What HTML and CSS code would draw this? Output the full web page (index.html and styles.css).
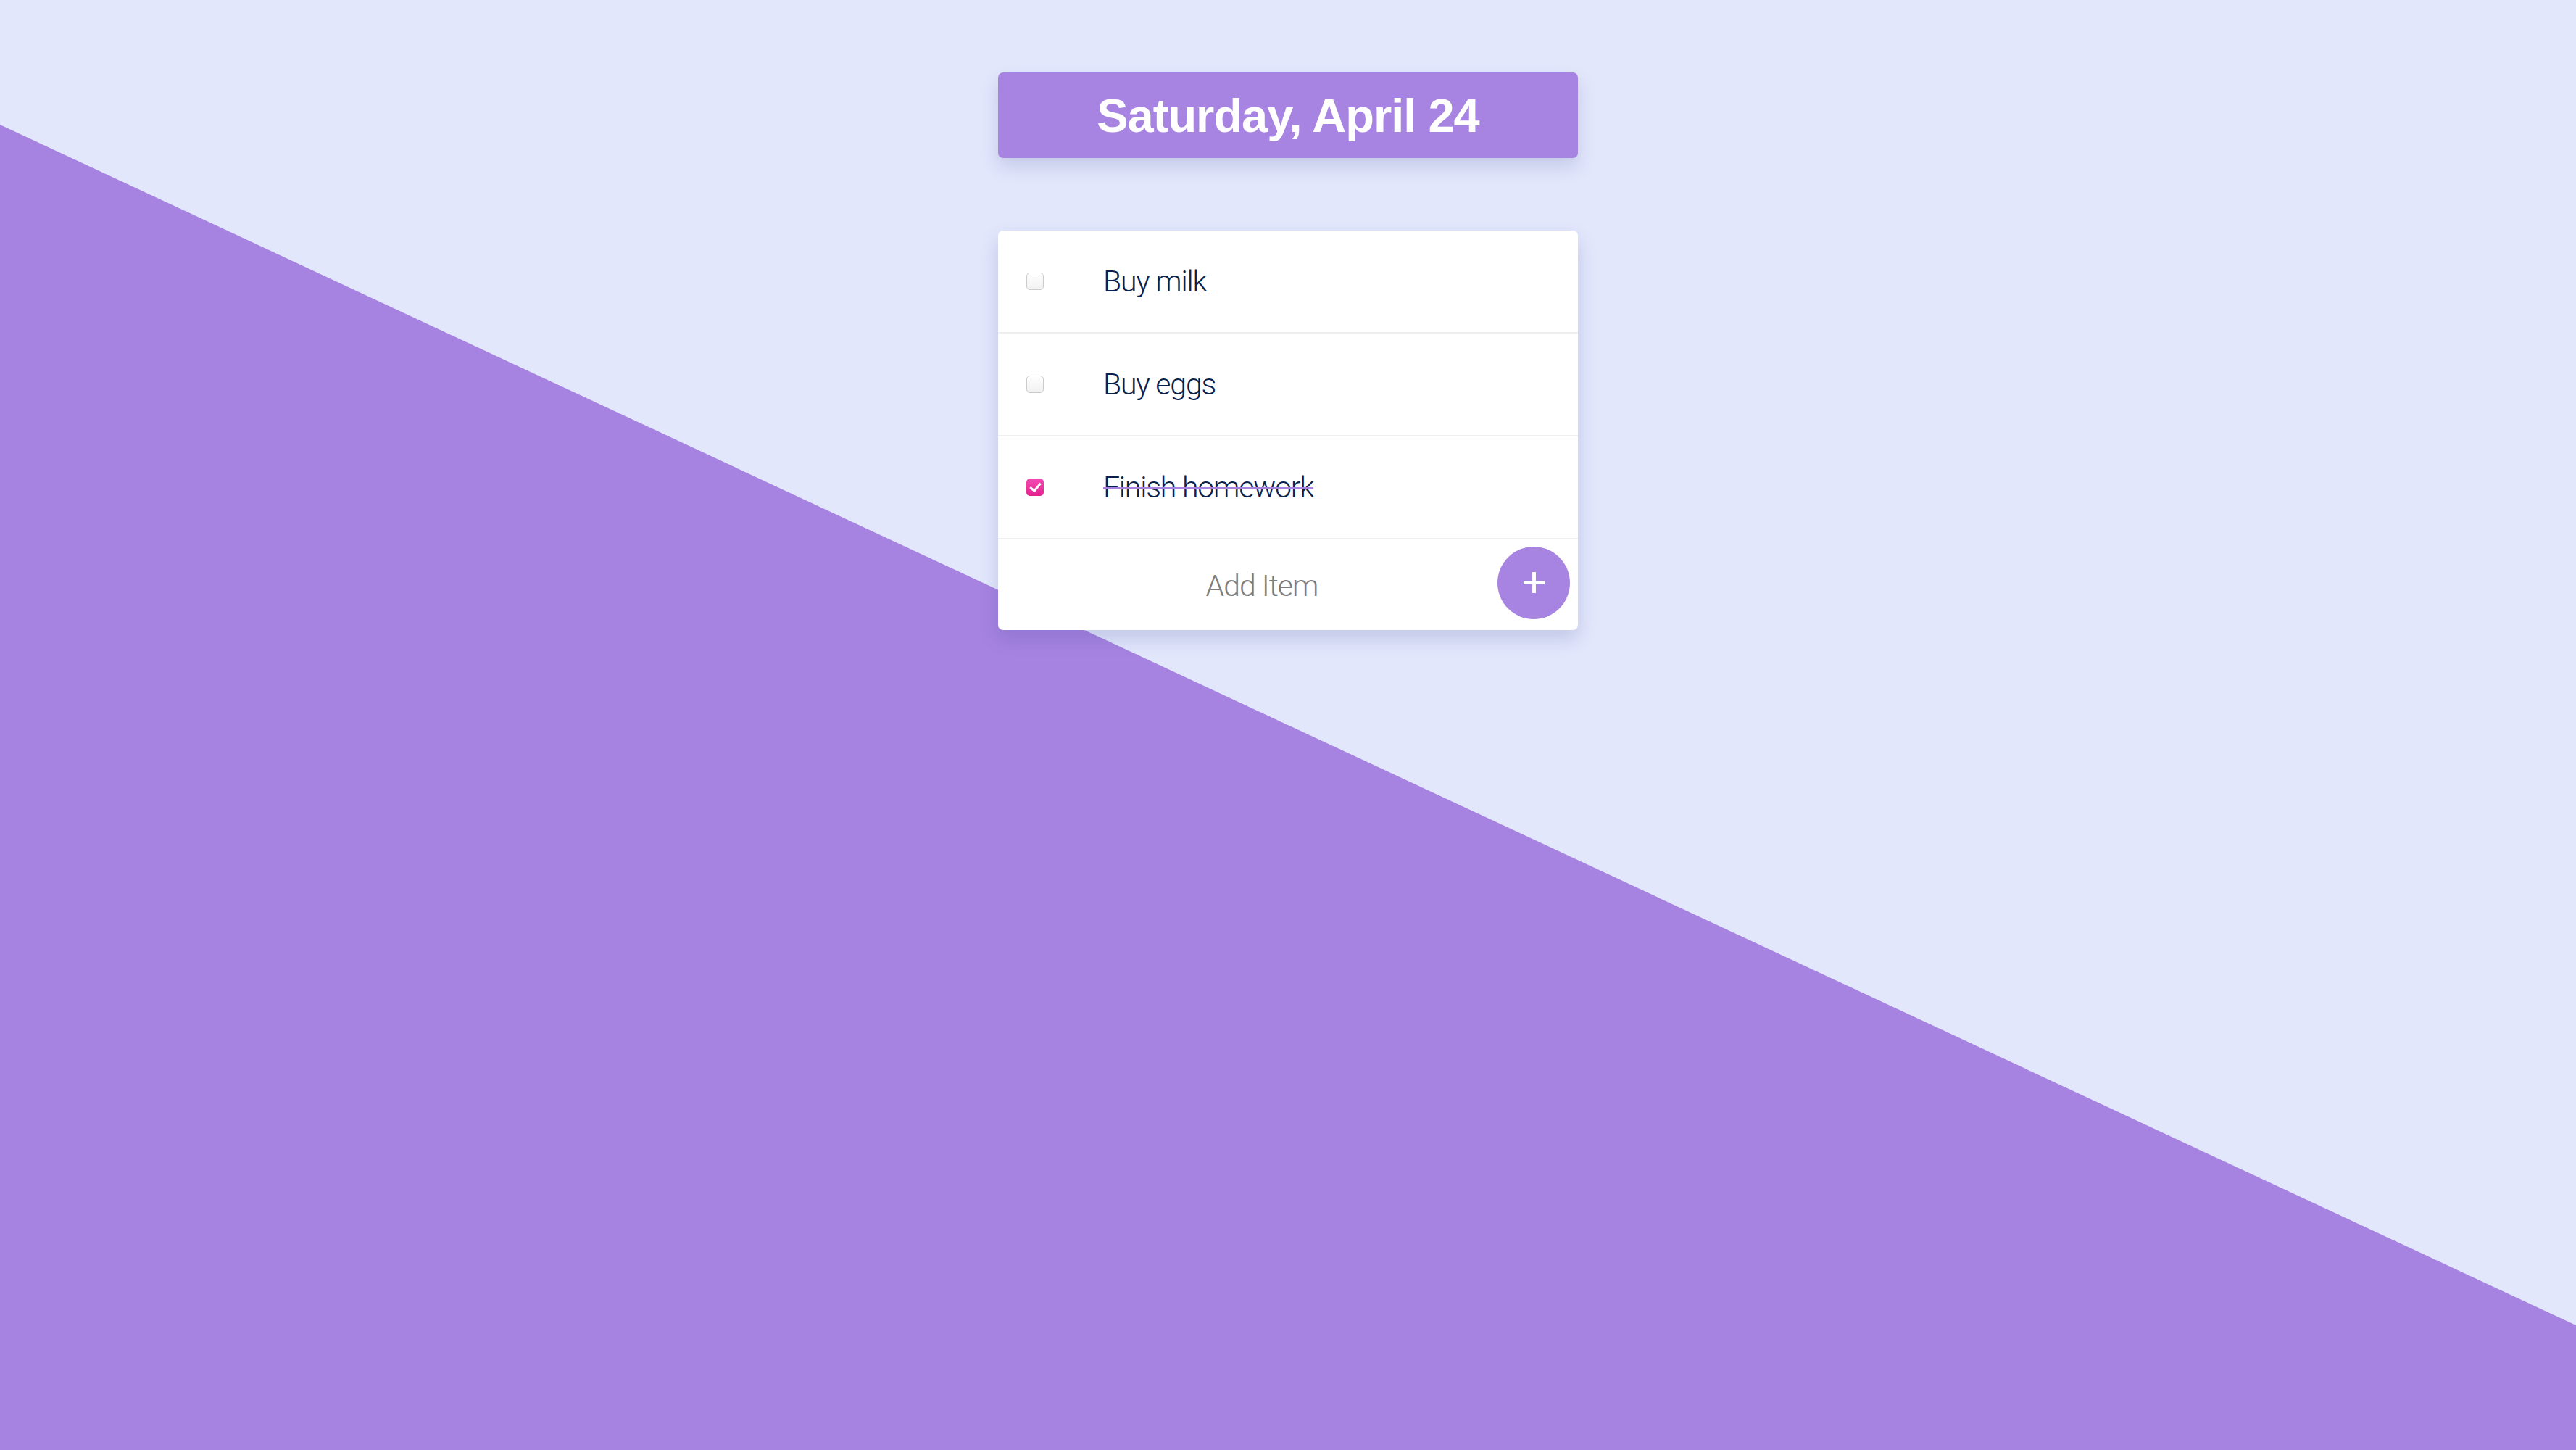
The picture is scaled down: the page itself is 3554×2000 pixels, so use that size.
FILE: index.html
```html
<!DOCTYPE html>
<html lang="en">
<head>
<meta charset="utf-8">
<title>Todo</title>
<link rel="stylesheet" href="styles.css">
</head>
<body>
<div class="backdrop"></div>
<main class="app">
  <h1 class="date">Saturday, April 24</h1>
  <section class="card">
    <label class="row">
      <input type="checkbox" class="check">
      <span class="label">Buy milk</span>
    </label>
    <label class="row">
      <input type="checkbox" class="check">
      <span class="label">Buy eggs</span>
    </label>
    <label class="row">
      <input type="checkbox" class="check" checked>
      <span class="label">Finish homework</span>
    </label>
    <div class="add-row">
      <input class="add-input" type="text" placeholder="Add Item">
      <button class="add-btn" type="button" aria-label="Add">
        <svg viewBox="0 0 32 32" width="32" height="32"><path d="M16 1v30M1 16h30" stroke="#fff" stroke-width="5" fill="none"/></svg>
      </button>
    </div>
  </section>
</main>
</body>
</html>
```

FILE: styles.css
```css
html, body {
  margin: 0;
  padding: 0;
  height: 100%;
}
body {
  background: #e2e7fc;
  font-family: "Liberation Sans", Arial, sans-serif;
  position: relative;
  overflow: hidden;
}
.backdrop {
  position: absolute;
  inset: 0;
  background: #a683e1;
  clip-path: polygon(0 172px, 100% 1828px, 100% 100%, 0 100%);
  z-index: 0;
}
.app {
  position: relative;
  z-index: 1;
  width: 800px;
  margin: 0 auto;
  padding-top: 100px;
  display: flex;
  flex-direction: column;
  gap: 100px;
}
.date {
  margin: 0;
  height: 118px;
  display: flex;
  align-items: center;
  justify-content: center;
  background: #a784e1;
  color: #fff;
  border-radius: 7px;
  font-family: "Liberation Sans", Arial, sans-serif;
  font-weight: 700;
  font-size: 65px;
  letter-spacing: -1px;
  box-shadow: 0 12px 24px rgba(60, 70, 140, 0.18);
}
.card {
  background: #fff;
  border-radius: 7px;
  box-shadow: 0 12px 26px rgba(60, 70, 140, 0.2);
  display: flex;
  flex-direction: column;
}
.row {
  height: 140px;
  display: flex;
  align-items: center;
  padding-left: 39px;
  border-bottom: 2px solid #efefef;
}
.check {
  appearance: none;
  -webkit-appearance: none;
  margin: 0;
  width: 24px;
  height: 24px;
  border: 1px solid #cbcbcb;
  border-radius: 5px;
  background: linear-gradient(#ffffff, #f1f1f1);
  box-sizing: border-box;
  flex: none;
}
.check:checked {
  border: none;
  background: linear-gradient(#f24bb2, #e5208f);
  position: relative;
}
.check:checked::after {
  content: "";
  position: absolute;
  left: 8px;
  top: 3px;
  width: 6px;
  height: 12px;
  border: solid #fff;
  border-width: 0 3px 3px 0;
  transform: rotate(40deg);
}
.label {
  margin-left: 82px;
  font-family: Roboto, "Liberation Sans", sans-serif;
  font-weight: 300;
  font-size: 41px;
  color: #08214d;
  letter-spacing: -1.2px;
}
.check:checked + .label {
  text-decoration: line-through;
  text-decoration-color: #a683e1;
  text-decoration-thickness: 3px;
}
.add-row {
  height: 125px;
  display: flex;
  align-items: center;
  padding-right: 11px;
}
.add-input {
  flex: 1;
  min-width: 0;
  border: none;
  outline: none;
  background: transparent;
  text-align: center;
  padding: 0 0 0 39px;
  font-family: Roboto, "Liberation Sans", sans-serif;
  font-weight: 300;
  font-size: 41px;
  letter-spacing: -1px;
  color: #7a7a7a;
  margin-top: 2px;
}
.add-input::placeholder {
  color: #7d7d7d;
}
.add-btn {
  width: 100px;
  height: 100px;
  border-radius: 50%;
  border: none;
  background: #a784e1;
  display: flex;
  align-items: center;
  justify-content: center;
  padding: 0;
  margin-top: -6px;
  flex: none;
}
.add-btn svg {
  width: 31px;
  height: 31px;
}
```
